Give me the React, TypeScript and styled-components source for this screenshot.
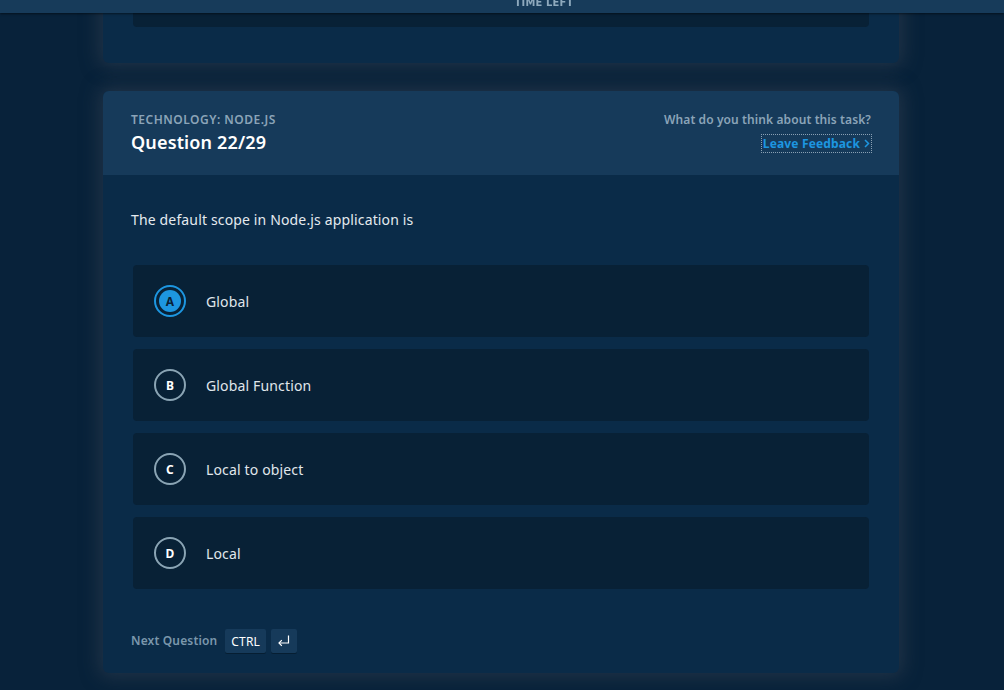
import React, { ReactElement, useState } from 'react';
import styled, { createGlobalStyle } from 'styled-components';

const GlobalStyle = createGlobalStyle`
    html, body {
        margin: 0;
        padding: 0;
        background: #08223a;
        font-family: "Noto Sans", "Open Sans", sans-serif;
        letter-spacing: 0.15px;
        overflow: hidden;
    }
`

const TimerBar = styled.div`
    position: fixed;
    top: 0;
    left: 0;
    right: 0;
    height: 13px;
    background: #173b5a;
    box-shadow: 0 1px 2px rgba(0, 0, 0, 0.5);
    overflow: hidden;
    z-index: 5;
`

const TimerLabel = styled.div`
    position: absolute;
    left: 0;
    right: 0;
    bottom: 5px;
    padding-left: 84px;
    text-align: center;
    font-family: "DejaVu Sans Condensed", "Liberation Sans Narrow", sans-serif;
    font-weight: bold;
    font-size: 11px;
    line-height: 11px;
    letter-spacing: 0.2px;
    color: #8ea9bd;
`

const Page = styled.div`
    display: flex;
    flex-direction: column;
    align-items: center;
    gap: 28px;
    padding: 0 2px 40px 0;
`

const Card = styled.section<{ $offset?: number }>`
    width: 796px;
    margin-top: ${p => p.$offset ?? 0}px;
    background: #0a2b48;
    border-radius: 6px;
    box-shadow: 0 0 18px 4px rgba(52, 66, 82, 0.55);
    overflow: hidden;
`

const PrevBody = styled.div`
    padding: 0 30px 36px;
`

const PrevBlock = styled.div`
    height: 80px;
    background: #082136;
    border-radius: 4px;
`

const Header = styled.header`
    height: 84px;
    box-sizing: border-box;
    background: #163a5a;
    padding: 20px 28px 0;
    display: flex;
    justify-content: space-between;
`

const HeaderLeft = styled.div`
    display: flex;
    flex-direction: column;
`

const HeaderRight = styled.div`
    display: flex;
    flex-direction: column;
    align-items: flex-end;
`

const Kicker = styled.div<{ $spaced?: boolean }>`
    font-size: 12px;
    line-height: 17px;
    font-weight: 600;
    letter-spacing: ${p => (p.$spaced ? '0.5px' : '0.1px')};
    color: #8ba4b8;
`

const Title = styled.h2`
    margin: 2px 0 0;
    font-size: 18px;
    line-height: 24px;
    font-weight: 600;
    color: #ffffff;
`

const FeedbackLink = styled.a`
    margin-top: 7px;
    display: inline-flex;
    align-items: center;
    gap: 4px;
    padding: 0 1px;
    height: 17px;
    outline: 1px dotted #8aa0b3;
    font-size: 12px;
    font-weight: bold;
    color: #1d96e0;
    cursor: pointer;
`

const Body = styled.div`
    padding: 35px 28px 20px;
`

const QuestionText = styled.p`
    margin: 0 0 35px;
    font-size: 14px;
    line-height: 20px;
    color: #e4eaef;
`

const Options = styled.div`
    display: flex;
    flex-direction: column;
    gap: 12px;
    margin: 0 2px;
`

const Option = styled.div`
    height: 72px;
    display: flex;
    align-items: center;
    gap: 20px;
    padding: 0 21px;
    background: #082136;
    border-radius: 4px;
    cursor: pointer;
`

const Badge = styled.div<{ $active: boolean }>`
    width: 32px;
    height: 32px;
    box-sizing: border-box;
    border-radius: 50%;
    border: 2px solid ${p => (p.$active ? '#1d96e0' : '#8aa4b4')};
    display: flex;
    align-items: center;
    justify-content: center;
`

const BadgeInner = styled.div<{ $active: boolean }>`
    width: 22px;
    height: 22px;
    border-radius: 50%;
    background: ${p => (p.$active ? '#1d96e0' : 'transparent')};
    color: ${p => (p.$active ? '#0a2136' : '#ffffff')};
    display: flex;
    align-items: center;
    justify-content: center;
    font-size: 12px;
    font-weight: bold;
`

const OptionText = styled.span`
    font-size: 14px;
    color: #e0e7ec;
`

const Footer = styled.div`
    margin-top: 40px;
    display: flex;
    align-items: center;
    gap: 5px;
`

const NextLabel = styled.span`
    margin-right: 3px;
    font-size: 12px;
    line-height: 16px;
    font-weight: 600;
    color: #7b97ac;
`

const Key = styled.kbd`
    height: 24px;
    min-width: 26px;
    box-sizing: border-box;
    padding: 0 6px;
    display: inline-flex;
    align-items: center;
    justify-content: center;
    background: #163a5a;
    border-radius: 2px;
    box-shadow: 0 1px 0 rgba(0, 0, 0, 0.3);
    font-family: "Noto Sans", sans-serif;
    font-size: 12px;
    color: #ffffff;
`

const options = [
    { key: 'A', text: 'Global' },
    { key: 'B', text: 'Global Function' },
    { key: 'C', text: 'Local to object' },
    { key: 'D', text: 'Local' }
]

export default function App(): ReactElement {
    const [selected, setSelected] = useState('A');

    return (
        <>
            <GlobalStyle />
            <TimerBar>
                <TimerLabel>TIME LEFT</TimerLabel>
            </TimerBar>
            <Page>
                <Card $offset={-53}>
                    <PrevBody>
                        <PrevBlock />
                    </PrevBody>
                </Card>
                <Card>
                    <Header>
                        <HeaderLeft>
                            <Kicker $spaced>TECHNOLOGY: NODE.JS</Kicker>
                            <Title>Question 22/29</Title>
                        </HeaderLeft>
                        <HeaderRight>
                            <Kicker>What do you think about this task?</Kicker>
                            <FeedbackLink>
                                Leave Feedback
                                <svg width="6" height="9" viewBox="0 0 6 9">
                                    <path d="M1 1 L4.5 4.5 L1 8" fill="none" stroke="#1d96e0" strokeWidth="1.5" />
                                </svg>
                            </FeedbackLink>
                        </HeaderRight>
                    </Header>
                    <Body>
                        <QuestionText>The default scope in Node.js application is</QuestionText>
                        <Options>
                            {options.map(o => (
                                <Option key={o.key} onClick={() => setSelected(o.key)}>
                                    <Badge $active={selected === o.key}>
                                        <BadgeInner $active={selected === o.key}>{o.key}</BadgeInner>
                                    </Badge>
                                    <OptionText>{o.text}</OptionText>
                                </Option>
                            ))}
                        </Options>
                        <Footer>
                            <NextLabel>Next Question</NextLabel>
                            <Key>CTRL</Key>
                            <Key>
                                <svg width="13" height="12" viewBox="0 0 13 12">
                                    <path d="M11.5 0.5 V8 H2" fill="none" stroke="#ffffff" strokeWidth="1.2" />
                                    <path d="M4.8 5.2 L2 8 L4.8 10.8" fill="none" stroke="#ffffff" strokeWidth="1.2" />
                                </svg>
                            </Key>
                        </Footer>
                    </Body>
                </Card>
            </Page>
        </>
    )
}
